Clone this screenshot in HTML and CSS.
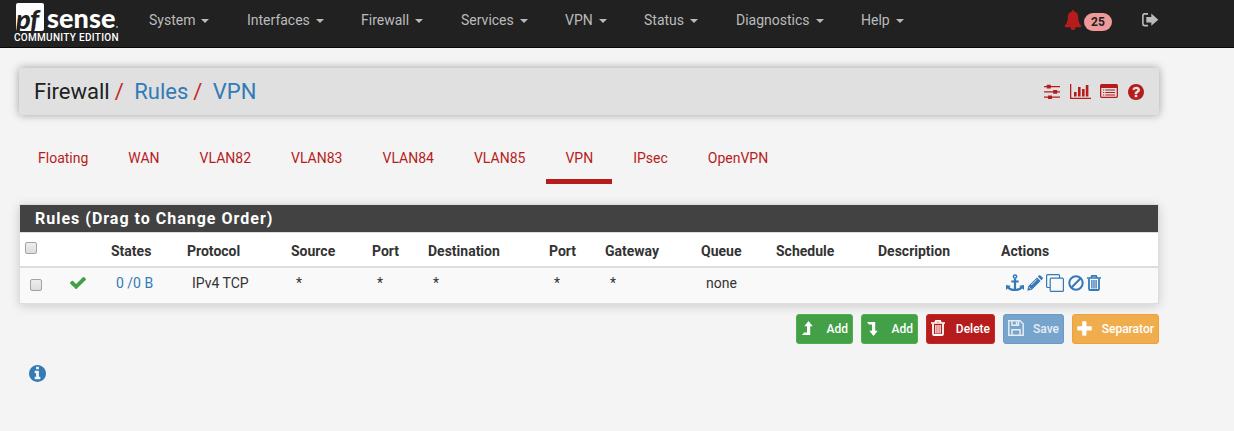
FILE: index.html
```html
<!DOCTYPE html>
<html lang="en">
<head>
<meta charset="utf-8">
<title>Firewall: Rules: VPN</title>
<link rel="stylesheet" href="styles.css">
</head>
<body>
<header class="navbar">
  <a class="brand">
    <span class="logo"><span class="logo-pf">pf</span><span class="logo-sense">sense</span><span class="logo-dot"></span></span>
    <span class="edition">COMMUNITY EDITION</span>
  </a>
  <nav class="menu">
    <a class="m1">System</a><a class="m2">Interfaces</a><a class="m3">Firewall</a><a class="m4">Services</a><a class="m5">VPN</a><a class="m6">Status</a><a class="m7">Diagnostics</a><a class="m8">Help</a>
  </nav>
  <div class="alerts">
    <svg width="18" height="20" viewBox="0 0 1792 1792" preserveAspectRatio="none"><path fill="#b71c1c" d="M1728 1408q0 52-38 90t-90 38h-448q0 106-75 181t-181 75-181-75-75-181h-448q-52 0-90-38t-38-90q50-42 91-88t85-119.500 74.500-158.500 50-206 19.500-260q0-152 117-282.500t307-158.500q-8-19-8-39 0-40 28-68t68-28 68 28 28 68q0 20-8 39 190 28 307 158.500t117 282.500q0 139 19.500 260t50 206 74.500 158.500 85 119.500 91 88z"/></svg>
    <span class="badge">25</span>
  </div>
  <svg class="signout" width="17" height="14" viewBox="0 0 17 14"><path d="M6 .9H2.800Q.9.900.9 2.800v7.900Q.9 12.600 2.800 12.600H6" fill="none" stroke="#bbb" stroke-width="1.600"/><path d="M4.300 4H9.300V.6l7 6.100-7 6.100V9.500H4.300z" fill="#bbb"/></svg>
</header>

<main class="page">
  <div class="titlebar">
    <h1 class="crumbs"><span>Firewall</span><i>/</i><a>Rules</a><i>/</i><a>VPN</a></h1>
    <div class="tools">
      <svg class="sliders" width="16" height="16" viewBox="0 0 16 16" fill="#b71c1c"><path d="M0 2h16v1.200H0zM0 7.300h16v1.200H0zM0 12.600h16v1.200H0z"/><path d="M2.800.8h4v3.600H2.800zM9.200 6.100h4v3.600h-4zM4 11.400h4V15H4z"/></svg>
      <svg class="chart" width="21" height="15" viewBox="0 0 21 15" fill="#b71c1c"><path d="M0 0h1.300v13.700H21V15H0zM4 8h2.600v4.500H4zM8 3h2.600v9.500H8zM12 5h2.600v7.500H12zM15.800 1h2.600v11.500h-2.600z"/></svg>
      <svg class="list" width="18" height="14" viewBox="0 0 18 14"><rect x=".65" y=".65" width="16.700" height="12.700" rx="1" fill="none" stroke="#b71c1c" stroke-width="1.300"/><path fill="#b71c1c" d="M1 0h16v4H1zM3 5.400h1.200v1.200H3zM3 7.900h1.200v1.200H3zM3 10.400h1.200v1.200H3zM5.300 5.400H15v1.200H5.300zM5.300 7.900H15v1.200H5.300zM5.300 10.400H15v1.200H5.300z"/></svg>
      <svg width="16" height="16" viewBox="128 128 1536 1536"><path fill="#b71c1c" d="M1024 1376v-192q0-14-9-23t-23-9h-192q-14 0-23 9t-9 23v192q0 14 9 23t23 9h192q14 0 23-9t9-23zm256-672q0-88-55.500-163t-138.500-116-170-41q-243 0-371 213-15 24 8 42l132 100q7 6 19 6 16 0 25-12 53-68 86-92 34-24 86-24 48 0 85.500 26t37.500 59q0 38-20 61t-68 45q-63 28-115.500 86.500t-52.500 125.500v36q0 14 9 23t23 9h192q14 0 23-9t9-23q0-19 21.500-49.500t54.500-49.500q32-18 49-28.500t46-35 44.500-48 28-60.500 12.500-81zm384 192q0 209-103 385.500t-279.500 279.500-385.500 103-385.500-103-279.500-279.500-103-385.500 103-385.500 279.500-279.500 385.500-103 385.500 103 279.500 279.500 103 385.500z"/></svg>
    </div>
  </div>

  <nav class="tabs">
    <a>Floating</a><a>WAN</a><a>VLAN82</a><a>VLAN83</a><a>VLAN84</a><a>VLAN85</a><a class="active">VPN</a><a>IPsec</a><a>OpenVPN</a>
  </nav>

  <section class="panel">
    <h2>Rules (Drag to Change Order)</h2>
    <table>
      <colgroup><col class="c40"><col class="c46"><col class="c76"><col class="c104"><col class="c81"><col class="c56"><col class="c121"><col class="c56"><col class="c96"><col class="c75"><col class="c102"><col class="c123"><col></colgroup>
      <thead><tr><th><input type="checkbox"></th><th></th><th>States</th><th>Protocol</th><th>Source</th><th>Port</th><th>Destination</th><th>Port</th><th>Gateway</th><th>Queue</th><th>Schedule</th><th>Description</th><th>Actions</th></tr></thead>
      <tbody><tr><td><input type="checkbox"></td>
        <td><svg class="check" width="16" height="12" viewBox="121 334 1550 1188" preserveAspectRatio="none"><path fill="#43a047" d="M1671 566q0 40-28 68l-724 724-136 136q-28 28-68 28t-68-28l-136-136-362-362q-28-28-28-68t28-68l136-136q28-28 68-28t68 28l294 295 656-657q28-28 68-28t68 28l136 136q28 28 28 68z"/></svg></td>
        <td><a>0 /0 B</a></td><td>IPv4 TCP</td><td>*</td><td>*</td><td>*</td><td>*</td><td>*</td><td>none</td><td></td><td></td>
        <td><div class="actions">
          <svg width="18" height="18" viewBox="0 0 18 18" fill="none" stroke="#337ab7"><circle cx="9" cy="2.500" r="1.600" stroke-width="1.500"/><path d="M9 4.500V16M5.300 7.500h7.400" stroke-width="2.200"/><path d="M2 12.800Q4 16 9 16t7-3.200" stroke-width="2.200"/><path d="M0 11v5l4.800-4.300zM18 11v5l-4.800-4.300z" fill="#337ab7" stroke="none"/></svg>
          <svg class="pencil" width="16" height="16" viewBox="0 0 16 16" fill="#337ab7"><path d="M10 2.400 13.600 6l-8.800 8.800L.3 15.700l.9-4.500zM10.800 1.500 12 .4q.7-.6 1.400 0l2.200 2.200q.6.700 0 1.400l-1.200 1.200z"/><path d="M2 12.200 3.800 14M4.300 10 9.800 4.500" stroke="#f9f9f9" stroke-width=".9"/></svg>
          <svg class="clone" width="18" height="18" viewBox="0 0 18 18" fill="none" stroke="#337ab7" stroke-width="1.200"><path d="M4 13.500H1.500Q.6 13.500.6 12.600V1.500Q.6.600 1.500.6h11.100q.9 0 .9.900V4"/><rect x="4.200" y="4.200" width="13.200" height="13.200" rx="1"/></svg>
          <svg class="ban" width="16" height="16" viewBox="0 0 16 16" fill="none" stroke="#337ab7" stroke-width="2"><circle cx="8" cy="8" r="6.700"/><path d="M3.300 12.700 12.700 3.300"/></svg>
          <svg class="bin" width="14" height="16" viewBox="0 0 14 16" fill="none" stroke="#337ab7"><path d="M0 3h14M4.500 3V1.600Q4.500.8 5.200.8h3.600q.7 0 .7.800V3" stroke-width="1.700"/><path d="M2 3.500v10.200q0 1.300 1 1.300h8q1 0 1-1.300V3.500" stroke-width="1.800"/><path d="M4.900 5v8.500M7 5v8.500M9.100 5v8.500" stroke-width="1.300"/></svg>
        </div></td></tr></tbody>
    </table>
  </section>

  <div class="buttons">
    <a class="btn green add"><svg width="11" height="15" viewBox="0 0 11 15" fill="#fff"><path d="M6.500 0l4.200 5.200H8.200V14H0l2-2.600h3V5.200H2.300z"/></svg>Add</a>
    <a class="btn green add"><svg width="11" height="15" viewBox="0 0 11 15" fill="#fff"><path d="M6.500 15l4.200-5.200H8.200V1H0l2 2.600h3v6.200H2.300z"/></svg>Add</a>
    <a class="btn red"><svg width="14" height="16" viewBox="0 0 14 16" fill="none" stroke="#fff"><path d="M0 3h14M4.500 3V1.600Q4.500.8 5.200.8h3.600q.7 0 .7.800V3" stroke-width="1.700"/><path d="M2 3.500v10.200q0 1.300 1 1.300h8q1 0 1-1.300V3.500" stroke-width="1.800"/><path d="M4.900 5v8.500M7 5v8.500M9.100 5v8.500" stroke-width="1.300"/></svg>Delete</a>
    <a class="btn blue"><svg width="16" height="16" viewBox="0 0 16 16" fill="none" stroke="#e4edf5" stroke-width="1.500"><path d="M.8.800H12L15.200 4v11.200H.8z"/><path d="M4 15v-5.200h8V15M4 1v4.300h6.500V1M8.500 1.500v3"/></svg>Save</a>
    <a class="btn orange"><svg width="15" height="15" viewBox="0 0 15 15" fill="#fff"><path d="M5.200 1q0-.8.800-.8h2.600q.8 0 .8.800v4.300H14q.8 0 .8.800v2.500q0 .8-.8.800H9.400V14q0 .8-.8.800H6q-.8 0-.8-.8V9.400H1q-.8 0-.8-.8V6.100q0-.8.800-.8h4.200z"/></svg>Separator</a>
  </div>

  <svg class="info" width="17" height="17" viewBox="128 128 1536 1536"><path fill="#337ab7" d="M1152 1376v-160q0-14-9-23t-23-9h-96v-512q0-14-9-23t-23-9h-320q-14 0-23 9t-9 23v160q0 14 9 23t23 9h96v320h-96q-14 0-23 9t-9 23v160q0 14 9 23t23 9h448q14 0 23-9t9-23zm-128-896v-160q0-14-9-23t-23-9h-192q-14 0-23 9t-9 23v160q0 14 9 23t23 9h192q14 0 23-9t9-23zm640 416q0 209-103 385.500t-279.500 279.500-385.500 103-385.500-103-279.500-279.500-103-385.500 103-385.500 279.500-279.500 385.500-103 385.500 103 279.500 279.500 103 385.500z"/></svg>
</main>
</body>
</html>
```
FILE: styles.css
```css
* { box-sizing: border-box; }
body { margin: 0; height: 431px; background: #f4f4f4; color: #333; font: 14px/18px Roboto, sans-serif; }
svg { display: block; flex: none; }
a { color: #337ab7; }

.navbar { display: flex; height: 48px; background: #212121; border-bottom: 1px solid #080808; }
.brand { width: 135px; padding: 3px 0 0 14px; color: #fff; flex: none; }
.logo { display: flex; height: 29px; padding-left: 2px; }
.logo-pf { width: 28px; height: 28px; background: #fff; color: #212121; border-radius: 2px; font: italic 900 27px/32px Lato, sans-serif; letter-spacing: -.5px; flex: none; }
.logo-sense { margin-left: 3px; font: 900 27px/29px Lato, sans-serif; letter-spacing: .1px; }
.logo-dot { width: 2px; height: 2px; margin: 23px 0 0; background: #888; }
.edition { display: block; font-size: 10px; font-weight: 500; line-height: 12px; letter-spacing: .3px; white-space: nowrap; }
.menu { display: flex; width: 929px; padding-left: 14px; flex: none; }
.menu a { color: #bbb; line-height: 40px; white-space: nowrap; flex: none; }
.menu a::after { content: ""; display: inline-block; margin-left: 6px; vertical-align: 2px; border: 4px solid transparent; border-top-color: #bbb; border-bottom: 0; }
.m1 { width: 98px; } .m2 { width: 114px; } .m3 { width: 100px; } .m4 { width: 104px; }
.m5 { width: 79px; } .m6 { width: 92px; } .m7 { width: 125px; }
.alerts { display: flex; width: 78px; padding-top: 10px; gap: 2px; flex: none; }
.badge { width: 28px; height: 18px; margin-top: 3px; border-radius: 9px; background: #ef9a9a; color: #212121; font-size: 12px; font-weight: 700; text-align: center; }
.signout { margin-top: 13px; }

.page { width: 1140px; margin: 20px 0 0 19px; }
.titlebar { display: flex; justify-content: space-between; height: 47px; padding: 0 15px; background: #e0e0e0; border-radius: 2px; box-shadow: 0 0 8px rgba(0,0,0,.35); }
.crumbs { display: flex; margin: 0; font-size: 22px; font-weight: 400; line-height: 47px; }
.crumbs span { color: #212121; }
.crumbs i { margin: 0 10.5px 0 5px; color: #c62828; font-style: normal; }
.tools { display: flex; padding-top: 16px; }
.sliders { margin-right: 10px; } .chart { margin-right: 9px; } .list { margin-right: 10px; }

.tabs { display: flex; height: 69px; padding-top: 21px; gap: 2px; }
.tabs a { height: 48px; padding: 13px 19px 0; color: #b71c1c; }
.tabs .active { border-bottom: 5px solid #b71c1c; }

.panel { margin-top: 20px; height: 100px; border: 1px solid #ddd; background: #fff; box-shadow: 0 2px 10px rgba(0,0,0,.16); }
.panel h2 { height: 27px; margin: 0; padding-left: 15px; background: #424242; color: #fff; font-size: 16px; font-weight: 700; line-height: 28px; letter-spacing: 1px; }
table { width: 1138px; table-layout: fixed; border-collapse: separate; border-spacing: 0; }
.c40 { width: 40px; } .c46 { width: 46px; } .c76 { width: 76px; } .c104 { width: 104px; } .c81 { width: 81px; }
.c56 { width: 56px; } .c121 { width: 121px; } .c96 { width: 96px; } .c75 { width: 75px; } .c102 { width: 102px; } .c123 { width: 123px; }
th { height: 36px; padding: 2px 0 0 5px; border-top: 1px solid #ddd; border-bottom: 2px solid #ddd; text-align: left; font-weight: 700; }
td { height: 35px; padding: 0 0 5px 10px; background: #f9f9f9; }
input { appearance: none; display: block; width: 12px; height: 12px; margin: 0; border: 1px solid #a3a3a3; border-radius: 2px; background: linear-gradient(#eee, #dcdcdc); }
th input { margin-bottom: 6px; }
td input { margin-top: 3px; }
.actions { display: flex; height: 18px; }
.pencil { margin: 1px 3px 0; } .ban { margin: 1px 3px 0 4px; } .bin { margin-top: 1px; }

.buttons { display: flex; justify-content: flex-end; margin-top: 10px; gap: 8px; }
.btn { display: flex; align-items: center; justify-content: space-between; height: 30px; padding: 0 4px 0 5px; border: 1px solid; border-radius: 3px; color: #fff; font-size: 12px; font-weight: 500; }
.btn svg { margin-bottom: 2px; }
.green { background: #43a047; border-color: #4caf50; }
.add { width: 57px; }
.red { width: 69px; padding-left: 4px; background: #b71c1c; border-color: #c62828; }
.blue { width: 61px; padding-left: 4px; background: #77a4cd; border-color: #6d99c4; color: #e4edf5; }
.orange { width: 87px; padding-left: 4px; background: #f0ad4e; border-color: #eea236; }
.info { margin: 21px 0 0 10px; }
```
